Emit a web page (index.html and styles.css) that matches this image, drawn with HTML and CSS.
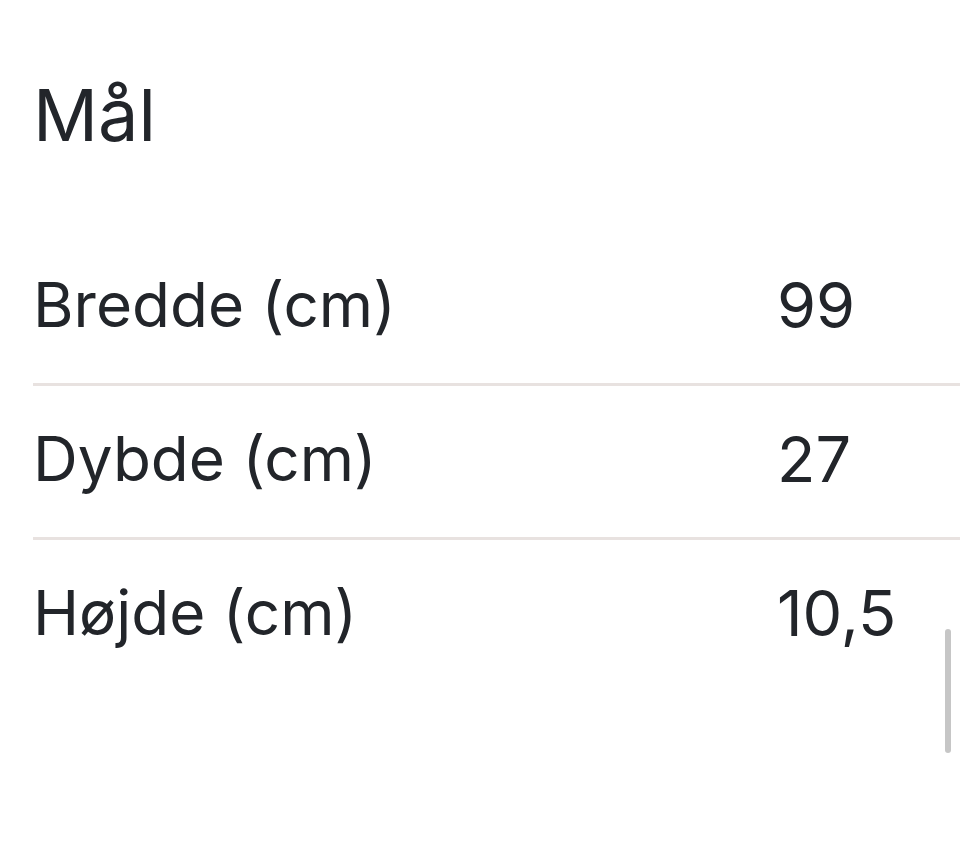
FILE: index.html
```html
<!DOCTYPE html>
<html lang="da">
<head>
<meta charset="utf-8">
<title>Mål</title>
<link rel="stylesheet" href="styles.css">
</head>
<body>
<main class="page">
  <h1 class="title">Mål</h1>
  <div class="specs">
    <div class="row"><span class="label">Bredde (cm)</span><span class="value">99</span></div>
    <div class="row"><span class="label">Dybde (cm)</span><span class="value">27</span></div>
    <div class="row"><span class="label">Højde (cm)</span><span class="value">10,5</span></div>
  </div>
</main>
<div class="scrollbar"></div>
</body>
</html>
```
FILE: styles.css
```css
html, body {
  margin: 0;
  padding: 0;
  background: #ffffff;
}
body {
  width: 960px;
  height: 866px;
  overflow: hidden;
  position: relative;
  font-family: Inter, "Noto Sans", sans-serif;
  color: #22252a;
}
.page {
  padding: 70px 0 0 33px;
}
.title {
  margin: 0;
  font-size: 72px;
  line-height: 90px;
  font-weight: 400;
}
.specs {
  margin-top: 72px;
}
.row {
  display: flex;
  padding: 35px 0 40px;
  border-bottom: 3px solid #e8e2e0;
  font-size: 62px;
  line-height: 76px;
}
.row:last-child {
  border-bottom: none;
}
.label {
  width: 744px;
  flex: none;
}
.value {
  flex: none;
  font-size: 63px;
}
.scrollbar {
  position: absolute;
  left: 945px;
  top: 629px;
  width: 6px;
  height: 124px;
  border-radius: 3px;
  background: #c6c6c6;
}
```
